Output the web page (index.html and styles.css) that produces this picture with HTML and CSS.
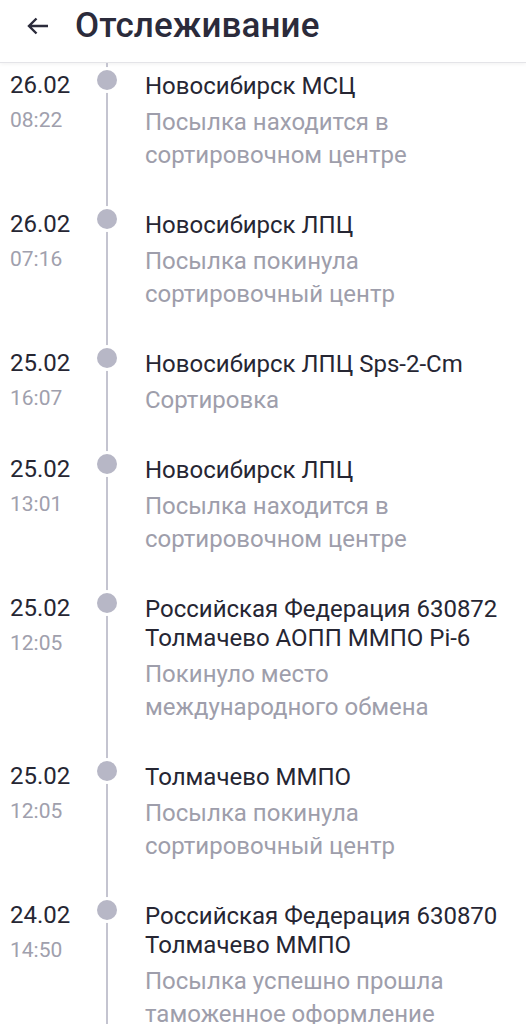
FILE: index.html
```html
<!DOCTYPE html>
<html lang="ru">
<head>
    <meta charset="UTF-8">
    <meta name="viewport" content="width=device-width, initial-scale=1.0">
    <title>Отслеживание</title>
    <link rel="stylesheet" href="styles.css">
</head>
<body>
    <header class="top-bar">
        <svg class="back" width="22" height="18" viewBox="0 0 22 18">
            <path d="M21 9H2M9.5 1.5L2 9l7.5 7.5" fill="none" stroke="#2b2b3b" stroke-width="2.4"/>
        </svg>
        <h1 class="title">Отслеживание</h1>
    </header>

    <div class="timeline">
        <div class="event">
            <div class="when">
                <div class="date">26.02</div>
                <div class="time">08:22</div>
            </div>
            <div class="rail"><span class="dot"></span></div>
            <div class="what">
                <div class="place">Новосибирск МСЦ</div>
                <div class="status">Посылка находится в сортировочном центре</div>
            </div>
        </div>
        <div class="event">
            <div class="when">
                <div class="date">26.02</div>
                <div class="time">07:16</div>
            </div>
            <div class="rail"><span class="dot"></span></div>
            <div class="what">
                <div class="place">Новосибирск ЛПЦ</div>
                <div class="status">Посылка покинула сортировочный центр</div>
            </div>
        </div>
        <div class="event">
            <div class="when">
                <div class="date">25.02</div>
                <div class="time">16:07</div>
            </div>
            <div class="rail"><span class="dot"></span></div>
            <div class="what">
                <div class="place">Новосибирск ЛПЦ Sps-2-Cm</div>
                <div class="status">Сортировка</div>
            </div>
        </div>
        <div class="event">
            <div class="when">
                <div class="date">25.02</div>
                <div class="time">13:01</div>
            </div>
            <div class="rail"><span class="dot"></span></div>
            <div class="what">
                <div class="place">Новосибирск ЛПЦ</div>
                <div class="status">Посылка находится в сортировочном центре</div>
            </div>
        </div>
        <div class="event">
            <div class="when">
                <div class="date">25.02</div>
                <div class="time">12:05</div>
            </div>
            <div class="rail"><span class="dot"></span></div>
            <div class="what">
                <div class="place">Российская Федерация 630872 Толмачево АОПП ММПО Pi-6</div>
                <div class="status">Покинуло место международного обмена</div>
            </div>
        </div>
        <div class="event">
            <div class="when">
                <div class="date">25.02</div>
                <div class="time">12:05</div>
            </div>
            <div class="rail"><span class="dot"></span></div>
            <div class="what">
                <div class="place">Толмачево ММПО</div>
                <div class="status">Посылка покинула сортировочный центр</div>
            </div>
        </div>
        <div class="event">
            <div class="when">
                <div class="date">24.02</div>
                <div class="time">14:50</div>
            </div>
            <div class="rail"><span class="dot"></span></div>
            <div class="what">
                <div class="place">Российская Федерация 630870 Толмачево ММПО</div>
                <div class="status">Посылка успешно прошла таможенное оформление</div>
            </div>
        </div>
    </div>
</body>
</html>
```

FILE: styles.css
```css
body {
    margin: 0;
    background: #ffffff;
    font-family: Roboto, "Noto Sans", sans-serif;
    overflow: hidden;
}

.top-bar {
    display: flex;
    align-items: center;
    height: 62px;
    padding-left: 27px;
    border-bottom: 1px solid #e4e4e8;
    box-shadow: 0 1px 4px rgba(0, 0, 0, 0.06);
}

.back {
    margin-top: -10px;
}

.title {
    margin: -12px 0 0 26px;
    font-size: 35px;
    font-weight: 500;
    color: #2b2b3b;
    letter-spacing: 0.1px;
}

.timeline {
    padding-left: 10px;
}

.event {
    display: grid;
    grid-template-columns: 87px 20px 1fr;
}

.when {
    padding-top: 1px;
}

.event:first-child .when {
    padding-top: 8px;
}

.date {
    font-size: 24px;
    line-height: 29px;
    color: #262633;
}

.time {
    margin-top: 6px;
    font-size: 21px;
    line-height: 28px;
    color: #a0a0ad;
}

.rail {
    background: linear-gradient(to right, transparent 9px, #c4c4d0 9px, #c4c4d0 11px, transparent 11px);
}

.event:first-child .rail {
    padding-top: 7px;
}

.dot {
    display: block;
    width: 20px;
    height: 20px;
    border-radius: 50%;
    background: #b7b7c6;
    box-shadow: 0 0 0 3px #ffffff;
}

.what {
    padding: 2px 16px 37px 28px;
}

.event:first-child .what {
    padding-top: 9px;
}

.place {
    font-size: 24px;
    line-height: 29px;
    color: #262633;
}

.status {
    margin-top: 5px;
    font-size: 24px;
    line-height: 33px;
    color: #9e9eab;
}
```
